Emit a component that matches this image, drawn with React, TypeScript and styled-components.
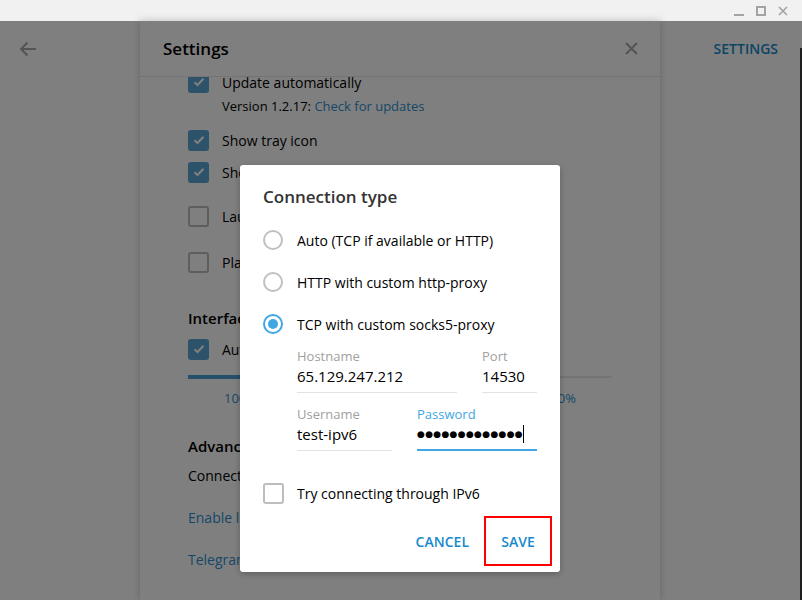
import styled, { createGlobalStyle } from "styled-components";

const GlobalStyle = createGlobalStyle`
  html, body {
    margin: 0;
    padding: 0;
    background: #ffffff;
  }
  body {
    font-family: "Open Sans", "DejaVu Sans", sans-serif;
  }
  * {
    box-sizing: border-box;
  }
`;

const Window = styled.div`
  width: 802px;
  height: 600px;
  display: flex;
  flex-direction: column;
  overflow: hidden;
`;

const TitleBar = styled.div`
  height: 21px;
  background: #f1f1f1;
  display: flex;
  justify-content: flex-end;
  align-items: center;
  gap: 12px;
  padding-right: 14px;
  color: #a3a3a3;
`;

const WinButton = styled.svg`
  width: 10px;
  height: 10px;
  display: block;
`;

const Main = styled.div`
  flex: 1;
  position: relative;
  display: flex;
  min-height: 0;
`;

const Page = styled.div`
  flex: 1;
  display: grid;
  grid-template-columns: 140px 520px 1fr;
  background: #ffffff;
`;

const RightEdge = styled.div`
  width: 2px;
  margin-top: 27px;
  background: #3c3c3c;
`;

const SideColumn = styled.div<{ $align: "start" | "end" }>`
  display: flex;
  justify-content: ${(p) => (p.$align === "end" ? "flex-end" : "flex-start")};
  align-items: flex-start;
  padding: 19px ${(p) => (p.$align === "end" ? "22px" : "0")} 0 ${(p) => (p.$align === "end" ? "0" : "19px")};
`;

const BackArrow = styled.svg`
  width: 18px;
  height: 18px;
  color: #a8a8a8;
`;

const TopLink = styled.div`
  font-size: 14px;
  font-weight: 600;
  color: #168acd;
  line-height: 20px;
  margin-top: -1px;
`;

const Panel = styled.div`
  display: flex;
  flex-direction: column;
  background: #ffffff;
  box-shadow: 0 0 8px rgba(0, 0, 0, 0.22);
  min-height: 0;
`;

const PanelHeader = styled.div`
  height: 56px;
  flex-shrink: 0;
  display: flex;
  align-items: center;
  justify-content: space-between;
  padding: 0 22px 0 23px;
  border-bottom: 1px solid #e6e6e6;
  background: #ffffff;
`;

const PanelTitle = styled.div`
  font-size: 17px;
  font-weight: 600;
  color: #000000;
  margin-top: -1px;
`;

const CloseIcon = styled.svg`
  width: 13px;
  height: 13px;
  color: #a8a8a8;
`;

const PanelBody = styled.div`
  flex: 1;
  overflow: hidden;
  min-height: 0;
`;

const PanelScroll = styled.div`
  margin-top: -5px;
  padding: 0 48px;
  display: flex;
  flex-direction: column;
`;

const CheckRow = styled.div<{ $gap?: number }>`
  display: flex;
  align-items: center;
  gap: 13px;
  height: 20px;
  margin-top: ${(p) => p.$gap ?? 0}px;
  font-size: 14px;
  color: #000000;
  white-space: nowrap;
`;

const Box = styled.div<{ $checked?: boolean }>`
  width: 21px;
  height: 21px;
  flex-shrink: 0;
  border-radius: 3px;
  display: flex;
  align-items: center;
  justify-content: center;
  background: ${(p) => (p.$checked ? "#5aa6d6" : "#ffffff")};
  border: 2px solid ${(p) => (p.$checked ? "#5aa6d6" : "#bdbdbd")};
`;

const SubText = styled.div`
  margin: 4px 0 0 34px;
  font-size: 13px;
  line-height: 20px;
  color: #000000;
  white-space: nowrap;
`;

const Link = styled.span`
  color: #2f8fd0;
`;

const SectionTitle = styled.div<{ $gap: number }>`
  margin-top: ${(p) => p.$gap}px;
  font-size: 15px;
  font-weight: 600;
  line-height: 20px;
  color: #000000;
`;

const Slider = styled.div`
  margin-top: 16px;
  height: 4px;
  display: flex;
  align-items: center;
`;

const SliderFill = styled.div`
  width: 90px;
  height: 4px;
  background: #4a9fd6;
`;

const SliderRest = styled.div`
  flex: 1;
  height: 2px;
  background: #e8e8e8;
`;

const ScaleLabels = styled.div`
  margin-top: 10px;
  padding: 0 36px;
  display: flex;
  justify-content: space-between;
  font-size: 13px;
  line-height: 18px;
  color: #2f8fd0;
`;

const PlainLine = styled.div<{ $gap: number; $link?: boolean }>`
  margin-top: ${(p) => p.$gap}px;
  font-size: 14px;
  line-height: 20px;
  color: ${(p) => (p.$link ? "#2f8fd0" : "#000000")};
  white-space: nowrap;
`;

const Overlay = styled.div`
  position: absolute;
  inset: 0;
  z-index: 10;
  background: rgba(0, 0, 0, 0.5);
  display: flex;
  justify-content: center;
  align-items: flex-start;
  padding-top: 144px;
  padding-right: 2px;
`;

const Dialog = styled.div`
  width: 320px;
  height: 407px;
  background: #ffffff;
  border-radius: 3px;
  box-shadow: 0 2px 6px rgba(0, 0, 0, 0.25);
  padding: 21px 23px 6px 23px;
  display: flex;
  flex-direction: column;
`;

const DialogTitle = styled.div`
  font-size: 17px;
  font-weight: 600;
  line-height: 22px;
  color: #333333;
  margin-bottom: 11px;
`;

const RadioRow = styled.div`
  height: 42px;
  display: flex;
  align-items: center;
  gap: 14px;
  font-size: 14px;
  color: #000000;
  white-space: nowrap;
`;

const Radio = styled.div<{ $checked?: boolean }>`
  width: 20px;
  height: 20px;
  border-radius: 50%;
  flex-shrink: 0;
  border: 2px solid ${(p) => (p.$checked ? "#40a7e3" : "#c0c0c0")};
  display: flex;
  align-items: center;
  justify-content: center;

  &::after {
    content: "";
    display: ${(p) => (p.$checked ? "block" : "none")};
    width: 10px;
    height: 10px;
    border-radius: 50%;
    background: #40a7e3;
  }
`;

const FieldGrid = styled.div<{ $cols: string; $gap: number }>`
  display: grid;
  grid-template-columns: ${(p) => p.$cols};
  column-gap: 25px;
  margin: ${(p) => p.$gap}px 0 0 34px;
`;

const Field = styled.div<{ $active?: boolean }>`
  display: flex;
  flex-direction: column;
  height: 46px;
  border-bottom: ${(p) => (p.$active ? "2px solid #40a7e3" : "1px solid #e3e3e3")};
`;

const FieldLabel = styled.div<{ $active?: boolean }>`
  font-size: 13px;
  line-height: 18px;
  color: ${(p) => (p.$active ? "#40a7e3" : "#a0a0a0")};
`;

const FieldValue = styled.div`
  font-size: 15px;
  line-height: 22px;
  color: #000000;
  display: flex;
  align-items: center;
  white-space: nowrap;
`;

const Dots = styled.span`
  font-size: 9px;
  letter-spacing: 0.3px;
  line-height: 22px;
`;

const Caret = styled.span`
  width: 1px;
  height: 18px;
  background: #000000;
  margin-left: 0;
`;

const CheckOption = styled.div`
  display: flex;
  align-items: center;
  gap: 13px;
  margin-top: 31px;
  height: 22px;
  font-size: 14px;
  color: #000000;
`;

const Actions = styled.div`
  margin-top: auto;
  margin-right: -15px;
  display: flex;
  justify-content: flex-end;
  align-items: center;
  gap: 3px;
`;

const TextButton = styled.button<{ $marked?: boolean }>`
  font-family: inherit;
  font-size: 14px;
  font-weight: 600;
  color: #168acd;
  background: transparent;
  border: 2px solid ${(p) => (p.$marked ? "#ff0000" : "transparent")};
  width: ${(p) => (p.$marked ? "68px" : "auto")};
  height: 50px;
  padding: 0 ${(p) => (p.$marked ? "0" : "10px")};
  cursor: pointer;
  display: flex;
  align-items: center;
  justify-content: center;
`;

function CheckMark() {
  return (
    <svg width="12" height="10" viewBox="0 0 12 10">
      <path d="M1.5 5.2 L4.5 8 L10.5 1.8" fill="none" stroke="#ffffff" strokeWidth="2" />
    </svg>
  );
}

function SettingCheck({ label, checked, gap }: { label: string; checked?: boolean; gap?: number }) {
  return (
    <CheckRow $gap={gap}>
      <Box $checked={checked}>{checked && <CheckMark />}</Box>
      {label}
    </CheckRow>
  );
}

export default function App() {
  return (
    <>
      <GlobalStyle />
      <Window>
        <TitleBar>
          <WinButton viewBox="0 0 10 10">
            <rect x="0" y="8" width="10" height="2" fill="currentColor" />
          </WinButton>
          <WinButton viewBox="0 0 10 10">
            <rect x="1" y="1" width="8" height="8" fill="none" stroke="currentColor" strokeWidth="2" />
          </WinButton>
          <WinButton viewBox="0 0 10 10">
            <path d="M1 1 L9 9 M9 1 L1 9" stroke="currentColor" strokeWidth="1.6" />
          </WinButton>
        </TitleBar>
        <Main>
          <Page>
            <SideColumn $align="start">
              <BackArrow viewBox="0 0 18 18">
                <path d="M17 9 H2 M8.5 2.5 L2 9 L8.5 15.5" fill="none" stroke="currentColor" strokeWidth="2" />
              </BackArrow>
            </SideColumn>
            <Panel>
              <PanelHeader>
                <PanelTitle>Settings</PanelTitle>
                <CloseIcon viewBox="0 0 13 13">
                  <path d="M1 1 L12 12 M12 1 L1 12" stroke="currentColor" strokeWidth="2" />
                </CloseIcon>
              </PanelHeader>
              <PanelBody>
                <PanelScroll>
                  <SettingCheck label="Update automatically" checked />
                  <SubText>
                    Version 1.2.17: <Link>Check for updates</Link>
                  </SubText>
                  <SettingCheck label="Show tray icon" checked gap={14} />
                  <SettingCheck label="Show taskbar icon" checked gap={12} />
                  <SettingCheck label="Launch Telegram when system starts" gap={24} />
                  <SettingCheck label="Place Telegram in “Send to” menu" gap={26} />
                  <SectionTitle $gap={36}>Interface Scale</SectionTitle>
                  <SettingCheck label="Auto (100%)" checked gap={11} />
                  <Slider>
                    <SliderFill />
                    <SliderRest />
                  </Slider>
                  <ScaleLabels>
                    <span>100%</span>
                    <span>125%</span>
                    <span>150%</span>
                    <span>200%</span>
                  </ScaleLabels>
                  <SectionTitle $gap={29}>Advanced Settings</SectionTitle>
                  <PlainLine $gap={10}>Connection type: TCP with proxy</PlainLine>
                  <PlainLine $gap={22} $link>Enable local passcode</PlainLine>
                  <PlainLine $gap={22} $link>Telegram FAQ</PlainLine>
                </PanelScroll>
              </PanelBody>
            </Panel>
            <SideColumn $align="end">
              <TopLink>SETTINGS</TopLink>
            </SideColumn>
          </Page>
          <RightEdge />
          <Overlay>
            <Dialog>
              <DialogTitle>Connection type</DialogTitle>
              <RadioRow>
                <Radio />
                Auto (TCP if available or HTTP)
              </RadioRow>
              <RadioRow>
                <Radio />
                HTTP with custom http-proxy
              </RadioRow>
              <RadioRow>
                <Radio $checked />
                TCP with custom socks5-proxy
              </RadioRow>
              <FieldGrid $cols="160px 55px" $gap={2}>
                <Field>
                  <FieldLabel>Hostname</FieldLabel>
                  <FieldValue>65.129.247.212</FieldValue>
                </Field>
                <Field>
                  <FieldLabel>Port</FieldLabel>
                  <FieldValue>14530</FieldValue>
                </Field>
              </FieldGrid>
              <FieldGrid $cols="95px 120px" $gap={12}>
                <Field>
                  <FieldLabel>Username</FieldLabel>
                  <FieldValue>test-ipv6</FieldValue>
                </Field>
                <Field $active>
                  <FieldLabel $active>Password</FieldLabel>
                  <FieldValue>
                    <Dots>●●●●●●●●●●●●●</Dots>
                    <Caret />
                  </FieldValue>
                </Field>
              </FieldGrid>
              <CheckOption>
                <Box />
                Try connecting through IPv6
              </CheckOption>
              <Actions>
                <TextButton>CANCEL</TextButton>
                <TextButton $marked>SAVE</TextButton>
              </Actions>
            </Dialog>
          </Overlay>
        </Main>
      </Window>
    </>
  );
}
